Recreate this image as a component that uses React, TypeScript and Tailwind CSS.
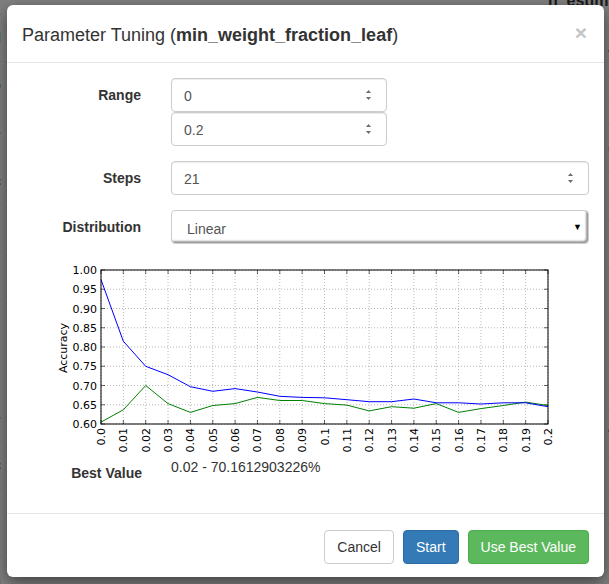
import React from "react";

const blue = [0.975, 0.815, 0.75, 0.728, 0.697, 0.685, 0.692, 0.683, 0.672, 0.669, 0.668, 0.663, 0.658, 0.658, 0.665, 0.655, 0.655, 0.652, 0.655, 0.655, 0.645];
const green = [0.605, 0.637, 0.7, 0.653, 0.63, 0.648, 0.653, 0.669, 0.661, 0.661, 0.653, 0.649, 0.634, 0.645, 0.641, 0.653, 0.63, 0.64, 0.648, 0.657, 0.648];
const xl = ["0.0", "0.01", "0.02", "0.03", "0.04", "0.05", "0.06", "0.07", "0.08", "0.09", "0.1", "0.11", "0.12", "0.13", "0.14", "0.15", "0.16", "0.17", "0.18", "0.19", "0.2"];
const yl = ["0.60", "0.65", "0.70", "0.75", "0.80", "0.85", "0.90", "0.95", "1.00"];

const L = 51, R = 498, T = 10, B = 164;
const px = (i: number) => L + (i * (R - L)) / 20;
const py = (v: number) => B - ((v - 0.6) / 0.4) * (B - T);

function Chart() {
  const pts = (a: number[]) => a.map((v, i) => `${px(i).toFixed(1)},${py(v).toFixed(1)}`).join(" ");
  return (
    <svg width="510" height="197" viewBox="0 0 510 197" className="block ml-[28px]" style={{ fontFamily: "'DejaVu Sans', sans-serif" }}>
      <rect x={L} y={T} width={R - L} height={B - T} fill="#fff" />
      {xl.map((_, i) => (
        <line key={"gx" + i} x1={px(i)} x2={px(i)} y1={T} y2={B} stroke="#9a9a9a" strokeWidth="0.7" strokeDasharray="1 2" />
      ))}
      {yl.map((_, i) => {
        const y = py(0.6 + i * 0.05);
        return <line key={"gy" + i} x1={L} x2={R} y1={y} y2={y} stroke="#9a9a9a" strokeWidth="0.7" strokeDasharray="1 2" />;
      })}
      {xl.map((_, i) => (
        <g key={"tx" + i}>
          <line x1={px(i)} x2={px(i)} y1={B} y2={B - 4} stroke="#000" strokeWidth="0.6" />
          <line x1={px(i)} x2={px(i)} y1={T} y2={T + 4} stroke="#000" strokeWidth="0.6" />
        </g>
      ))}
      {yl.map((_, i) => {
        const y = py(0.6 + i * 0.05);
        return (
          <g key={"ty" + i}>
            <line x1={L} x2={L + 4} y1={y} y2={y} stroke="#000" strokeWidth="0.6" />
            <line x1={R} x2={R - 4} y1={y} y2={y} stroke="#000" strokeWidth="0.6" />
          </g>
        );
      })}
      <polyline points={pts(green)} fill="none" stroke="#008000" strokeWidth="1" />
      <polyline points={pts(blue)} fill="none" stroke="#0000ff" strokeWidth="1" />
      <rect x={L} y={T} width={R - L} height={B - T} fill="none" stroke="#000" strokeWidth="1" />
      {yl.map((t, i) => (
        <text key={"yl" + i} x={47} y={py(0.6 + i * 0.05) + 4} fontSize="11" textAnchor="end" fill="#000">
          {t}
        </text>
      ))}
      {xl.map((t, i) => (
        <text key={"xl" + i} x={px(i) + 4} y={B + 4} fontSize="11" textAnchor="end" fill="#000" transform={`rotate(-90 ${px(i) + 4} ${B + 4})`}>
          {t}
        </text>
      ))}
      <text x={17} y={88} fontSize="11" textAnchor="middle" fill="#000" transform="rotate(-90 17 88)">
        Accuracy
      </text>
    </svg>
  );
}

function Spin() {
  return (
    <svg width="7" height="12" viewBox="0 0 7 12" className="shrink-0">
      <path d="M3.5 1 L6 4 L1 4 Z" fill="#6b6b6b" />
      <path d="M3.5 11 L6 8 L1 8 Z" fill="#6b6b6b" />
    </svg>
  );
}

function NumInput({ value, w }: { value: string; w: string }) {
  return (
    <div className={`${w} h-[34px] flex items-center justify-between pl-[12px] pr-[14px] border border-[#ccc] rounded-[4px] bg-white text-[14px] text-[#555] shadow-[inset_0_1px_1px_rgba(0,0,0,0.075)]`}>
      <span className="pt-[2px]">{value}</span>
      <Spin />
    </div>
  );
}

const leftRows: [number, string][] = [
  [15, ""], [47, "Model"], [48, "Info"], [48, "Type"], [47, "Ac"], [47, ""], [48, ""], [47, ""], [48, ""], [47, "Range"], [48, "Ac"], [67, ""], [55, "ri"], [19, ""],
];
const rightRows: [number, string][] = [
  [30, ""], [47, "t"], [48, "n"], [48, "d"], [47, "p"], [48, "n"], [47, ""], [48, ""], [47, "n"], [48, "t"], [67, "s"], [55, ""], [19, ""],
];

export default function App() {
  return (
    <div className="relative w-[609px] h-[584px] overflow-hidden bg-[#808080]" style={{ fontFamily: "'Liberation Sans', Arial, sans-serif" }}>
      {/* dimmed page behind */}
      <div className="flex h-full text-[14px] text-[#1a1a1a]">
        <div className="w-[7px] flex flex-col overflow-hidden">
          {leftRows.map(([h, t], i) => (
            <div key={i} className="shrink-0 flex items-center justify-end border-b border-[#6e6e6e] whitespace-nowrap" style={{ height: h }}>
              {t}
            </div>
          ))}
        </div>
        <div className="flex-1 flex flex-col">
          <div className="h-[8px] overflow-hidden flex pl-[547px]">
            <span className="font-bold text-[16px] leading-[16px] mt-[-7px] whitespace-nowrap">n_estim</span>
          </div>
        </div>
        <div className="w-[5px] flex flex-col overflow-hidden">
          {rightRows.map(([h, t], i) => (
            <div key={i} className="shrink-0 flex items-center border-b border-[#6e6e6e] whitespace-nowrap font-bold" style={{ height: h }}>
              {t}
            </div>
          ))}
        </div>
      </div>

      {/* modal */}
      <div className="absolute left-[7px] top-[5px] w-[597px] h-[572px] bg-white rounded-[6px] shadow-[0_5px_15px_rgba(0,0,0,0.5)] flex flex-col text-[#333]">
        <div className="h-[58px] px-[15px] flex items-center justify-between border-b border-[#e5e5e5] shrink-0">
          <h4 className="text-[18px] leading-[26px] text-[#333] mt-[2px]">
            Parameter Tuning (<b>min_weight_fraction_leaf</b>)
          </h4>
          <span className="text-[21px] font-bold text-[#c4c4c4] leading-none mr-[2px] mt-[-2px]">×</span>
        </div>

        <div className="px-[15px] pt-[15px] pb-[15px] flex flex-col flex-1">
          <div className="flex">
            <div className="w-[134px] pr-[15px] text-right font-bold text-[14px] pt-[7px] leading-[20px]">Range</div>
            <div className="flex flex-col pl-[15px]">
              <NumInput value="0" w="w-[216px]" />
              <NumInput value="0.2" w="w-[216px]" />
            </div>
          </div>

          <div className="flex mt-[15px]">
            <div className="w-[134px] pr-[15px] text-right font-bold text-[14px] pt-[7px] leading-[20px]">Steps</div>
            <div className="flex-1 pl-[15px]">
              <NumInput value="21" w="w-full" />
            </div>
          </div>

          <div className="flex mt-[15px]">
            <div className="w-[134px] pr-[15px] text-right font-bold text-[14px] pt-[7px] leading-[20px]">Distribution</div>
            <div className="flex-1 pl-[15px]">
              <div className="h-[34px] w-full flex items-center justify-between pl-[15px] pr-[3px] border border-[#ccc] rounded-[4px] bg-white text-[14px] text-[#555] shadow-[inset_-2px_-2px_2px_rgba(0,0,0,0.4)]">
                <span className="pt-[5px]">Linear</span>
                <span className="text-[9px] text-black leading-none pr-[3px]">▼</span>
              </div>
            </div>
          </div>

          <div className="mt-[16px]">
            <Chart />
          </div>

          <div className="flex">
            <div className="w-[134px] pr-[14px] text-right font-bold text-[14px] pt-[6px] leading-[20px]">Best Value</div>
            <div className="pl-[15px] text-[14px] leading-[20px] text-[#333]">0.02 - 70.1612903226%</div>
          </div>
        </div>

        <div className="border-t border-[#e5e5e5] px-[15px] pt-[16px] pb-[13px] flex justify-end gap-[9px] shrink-0">
          <button className="h-[34px] px-[12px] border border-[#ccc] rounded-[4px] bg-white text-[14px] text-[#333]">Cancel</button>
          <button className="h-[34px] px-[12px] border border-[#2e6da4] rounded-[4px] bg-[#337ab7] text-[14px] text-white">Start</button>
          <button className="h-[34px] px-[12px] border border-[#4cae4c] rounded-[4px] bg-[#5cb85c] text-[14px] text-white">Use Best Value</button>
        </div>
      </div>
    </div>
  );
}
